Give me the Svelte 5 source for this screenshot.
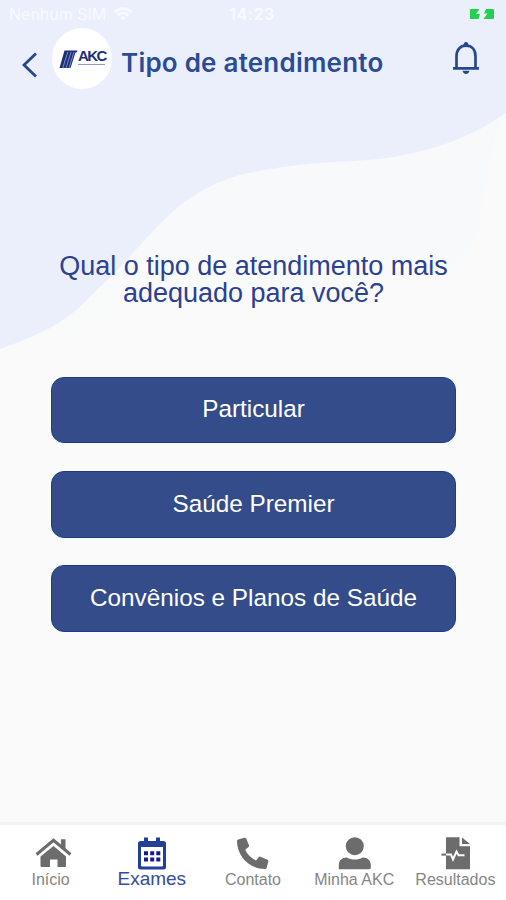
<script lang="ts">
  type Tab = { id: string; label: string };

  const options = ["Particular", "Saúde Premier", "Convênios e Planos de Saúde"];

  const tabs: Tab[] = [
    { id: "home", label: "Início" },
    { id: "exams", label: "Exames" },
    { id: "contact", label: "Contato" },
    { id: "profile", label: "Minha AKC" },
    { id: "results", label: "Resultados" },
  ];

  let active = $state("exams");
</script>

<div class="screen">
  <svg class="wave" viewBox="0 0 506 450" aria-hidden="true">
    <defs>
      <linearGradient id="mist" x1="0" y1="0" x2="0" y2="1">
        <stop offset="0.3" stop-color="#f7f9fb" />
        <stop offset="1" stop-color="#fafafa" />
      </linearGradient>
    </defs>
    <path fill="url(#mist)" d="M0 0H506V110C480 160 492 220 465 260C340 300 140 280 80 335C40 370 20 380 0 400Z" />
    <path
      fill="#ebeffc"
      d="M0 0H506V113C489 124 478 131 467 135C451 143 434 148 417 152C400 156 385 159 367 160C338 162 310 163 283 167C265 170 249 172 233 177C220 181 211 186 200 192C187 199 177 208 167 217C155 228 144 241 133 253C122 265 111 277 100 287C90 297 79 309 67 317C56 325 45 331 33 336C22 341 11 345 0 349Z"
    />
  </svg>

  <div class="status">
    <div class="network">
      <span>Nenhum SIM</span>
      <svg class="wifi" viewBox="0 0 20 14" aria-hidden="true">
        <path d="M1.500 5C6.500 .5 13.500 .5 18.500 5M4.700 8.200C7.800 5.500 12.200 5.500 15.300 8.200" />
        <path class="dot" d="M7 10.500Q10 8 13 10.500L10 13.600Z" />
      </svg>
    </div>
    <span class="time">14:23</span>
    <svg class="battery" viewBox="0 0 26 12" aria-hidden="true">
      <path d="M2 1H10.500L7 6H11L9.500 11H2Q1 11 1 10V2Q1 1 2 1Z" />
      <path d="M17 1H24Q25 1 25 2V10Q25 11 24 11H14.500L18.500 5.500H15Z" />
    </svg>
  </div>

  <header>
    <button class="back" aria-label="Voltar">
      <svg viewBox="0 0 18 28"><path d="M15 2.500L3 14L15 25.500" /></svg>
    </button>
    <div class="logo">
      <svg viewBox="0 0 19 20" aria-hidden="true">
        <path d="M5.500 1.500H18.500L17.500 3.500H16.500L11.500 19H.5Z" />
        <path class="stripe" d="M8.800 3L3.800 19M12 3L7 19M15 3L10 19" />
      </svg>
      <div class="brand">
        <b>AKC</b>
        <i></i>
      </div>
    </div>
    <h1>Tipo de atendimento</h1>
    <button class="bell" aria-label="Notificações">
      <svg viewBox="0 0 28 34">
        <path class="line" d="M1 27.400H27M4.500 27V15.500C4.500 9 8 4.700 14 4.700S23.500 9 23.500 15.500V27" />
        <path d="M11.500 4.500Q11.500 1 14 1T16.500 4.500ZM10.500 29.800H17.500Q16.500 33 14 33T10.500 29.800Z" />
      </svg>
    </button>
  </header>

  <main>
    <h2>Qual o tipo de atendimento mais<br />adequado para você?</h2>
    <div class="options">
      {#each options as option}
        <button class="option">{option}</button>
      {/each}
    </div>
  </main>

  <nav>
    {#each tabs as tab}
      <button class="tab" class:active={active === tab.id} onclick={() => (active = tab.id)}>
        <svg viewBox="0 0 36 34" aria-hidden="true">
          {#if tab.id === "home"}
            <path d="M7.500 20.500L20.500 10L33 20.500V30Q33 31 32 31H24.500V23.500H17V31H8.500Q7.500 31 7.500 30Z" />
            <path class="roof" d="M3.500 18.500L20.500 4.300L37.500 18.500" />
            <path d="M28 3.200H32.500V13.500L28 9.500Z" />
          {:else if tab.id === "exams"}
            <path
              fill-rule="evenodd"
              d="M6.500 5H10V1.500H14V5H22V1.500H26V5H29.500Q32 5 32 7.500V31Q32 33.500 29.500 33.500H6.500Q4 33.500 4 31V7.500Q4 5 6.500 5ZM7 11V29.500Q7 30.500 8 30.500H28Q29 30.500 29 29.500V11Z"
            />
            <path class="days" d="M10 15.200h4v4h-4zM16.200 15.200h4v4h-4zM22.300 15.200h4v4h-4zM10 21.600h4v4h-4zM16.200 21.600h4v4h-4zM22.300 21.600h4v4h-4z" />
          {:else if tab.id === "contact"}
            <path
              d="M3.200 3.500L9.500 1.800Q10.700 1.500 11.200 2.600L14 9.300Q14.400 10.300 13.500 11L10.200 13.700C12.500 18.500 16.200 22.200 21 24.500L23.700 21.200Q24.400 20.300 25.500 20.800L32.500 23.700Q33.600 24.200 33.300 25.400L31.700 31.700Q31.400 33 30 33C14.500 33 2 20.500 2 5Q2 3.800 3.200 3.500Z"
            />
          {:else if tab.id === "profile"}
            <circle cx="18.800" cy="10.200" r="9" />
            <path d="M2.800 33V29.500C2.800 24.500 5.800 21.500 10.800 21.500C15.800 24.200 21.800 24.200 26.800 21.500C31.800 21.500 34.800 24.500 34.800 29.500V31.500Q34.800 33.200 32.800 33.200H4.800Q2.800 33.200 2.800 33Z" />
          {:else}
            <path d="M9 1.200H22.500V10.200H33V33.200H9Z" />
            <path d="M25 1.500L33 8H25Z" />
            <path class="tail" d="M4.500 18.600H9.500" />
            <path class="pulse" d="M9 18.600H14L16 23.500L19.500 15.500L21.500 19.200H27.500" />
          {/if}
        </svg>
        <span>{tab.label}</span>
      </button>
    {/each}
  </nav>
</div>

<style>
  :global(body) {
    margin: 0;
  }
  .screen {
    position: relative;
    display: flex;
    flex-direction: column;
    width: 506px;
    height: 900px;
    overflow: hidden;
    background: #fafafa;
    font-family: "Liberation Sans", Arial, sans-serif;
    color: #27478f;
  }
  button {
    padding: 0;
    border: 0;
    background: none;
    color: inherit;
    font: inherit;
  }
  svg {
    display: block;
    flex: none;
    fill: currentColor;
    overflow: visible;
  }
  .wave {
    position: absolute;
    top: 0;
    left: 0;
    width: 506px;
    height: 450px;
  }
  .status,
  header,
  main,
  nav {
    position: relative;
  }
  .status {
    display: grid;
    grid-template-columns: 1fr auto 1fr;
    align-items: center;
    height: 28px;
    padding: 0 11px 0 9px;
    font-family: Inter, sans-serif;
    font-size: 16px;
    color: #f8faff;
  }
  .network {
    display: flex;
    align-items: center;
    gap: 7px;
    white-space: nowrap;
  }
  .wifi {
    width: 20px;
    height: 14px;
    fill: none;
    stroke: currentColor;
    stroke-width: 2.8;
  }
  .wifi .dot {
    fill: currentColor;
    stroke: none;
  }
  .time {
    font-weight: 600;
    letter-spacing: 0.6px;
  }
  .battery {
    width: 26px;
    height: 12px;
    justify-self: end;
    color: #24d052;
  }
  header {
    display: flex;
    align-items: center;
    height: 61px;
    padding: 0 26px 0 21px;
  }
  .back {
    margin-top: 12px;
  }
  .back svg {
    width: 18px;
    height: 28px;
    fill: none;
    stroke: currentColor;
    stroke-width: 2.8;
  }
  .logo {
    display: flex;
    align-items: center;
    justify-content: center;
    width: 60px;
    height: 61px;
    margin-left: 13px;
    border-radius: 50%;
    background: #fff;
    color: #1c2f78;
  }
  .logo svg {
    width: 19px;
    height: 20px;
  }
  .logo .stripe {
    stroke: #a9b9df;
    stroke-width: 0.7;
  }
  .brand {
    margin-top: -3px;
  }
  .brand b {
    display: block;
    width: 27px;
    font-size: 15px;
    line-height: 14px;
    letter-spacing: -1.6px;
  }
  .brand i {
    display: block;
    height: 1px;
    margin-top: 1px;
    background: #8f9bc2;
  }
  h1 {
    margin: 9px 0 0 9px;
    font-family: Inter, "Liberation Sans", sans-serif;
    font-size: 26px;
    font-weight: 600;
    line-height: 32px;
    letter-spacing: 0.22px;
    white-space: nowrap;
    color: #2b4c94;
  }
  .bell {
    margin-left: auto;
    margin-top: -1px;
  }
  .bell svg {
    width: 28px;
    height: 34px;
  }
  .bell .line {
    fill: none;
    stroke: currentColor;
    stroke-width: 2.7;
  }
  main {
    flex: 1;
    padding: 164px 50px 0 51px;
  }
  h2 {
    margin: 0;
    font-size: 27px;
    font-weight: 400;
    line-height: 27px;
    text-align: center;
    white-space: nowrap;
    color: #2b4190;
  }
  .options {
    display: grid;
    gap: 27.7px;
    margin-top: 69.5px;
  }
  .option {
    height: 66.7px;
    padding-bottom: 1px;
    border: 1px solid #1b3d85;
    border-radius: 13px;
    background: #344c8a;
    color: #fff;
    font-size: 24.3px;
  }
  nav {
    display: grid;
    grid-template-columns: repeat(5, 1fr);
    height: 75px;
    border-top: 3px solid #f2f2f2;
    background: #fff;
  }
  .tab {
    display: flex;
    flex-direction: column;
    align-items: center;
    padding-top: 11px;
    color: #6c6c6c;
    font-size: 16px;
    line-height: 20px;
  }
  .tab svg {
    width: 36px;
    height: 34px;
  }
  .tab span {
    color: #858585;
    white-space: nowrap;
  }
  .tab.active {
    color: #243f97;
    font-size: 19px;
    line-height: 18px;
  }
  .tab.active span {
    color: #344c9b;
  }
  .roof,
  .tail,
  .pulse {
    fill: none;
    stroke: currentColor;
    stroke-width: 3;
  }
  .tail {
    stroke-width: 2;
  }
  .pulse {
    stroke: #fff;
    stroke-width: 2;
  }
  .days {
    fill: #141b8c;
  }
</style>
